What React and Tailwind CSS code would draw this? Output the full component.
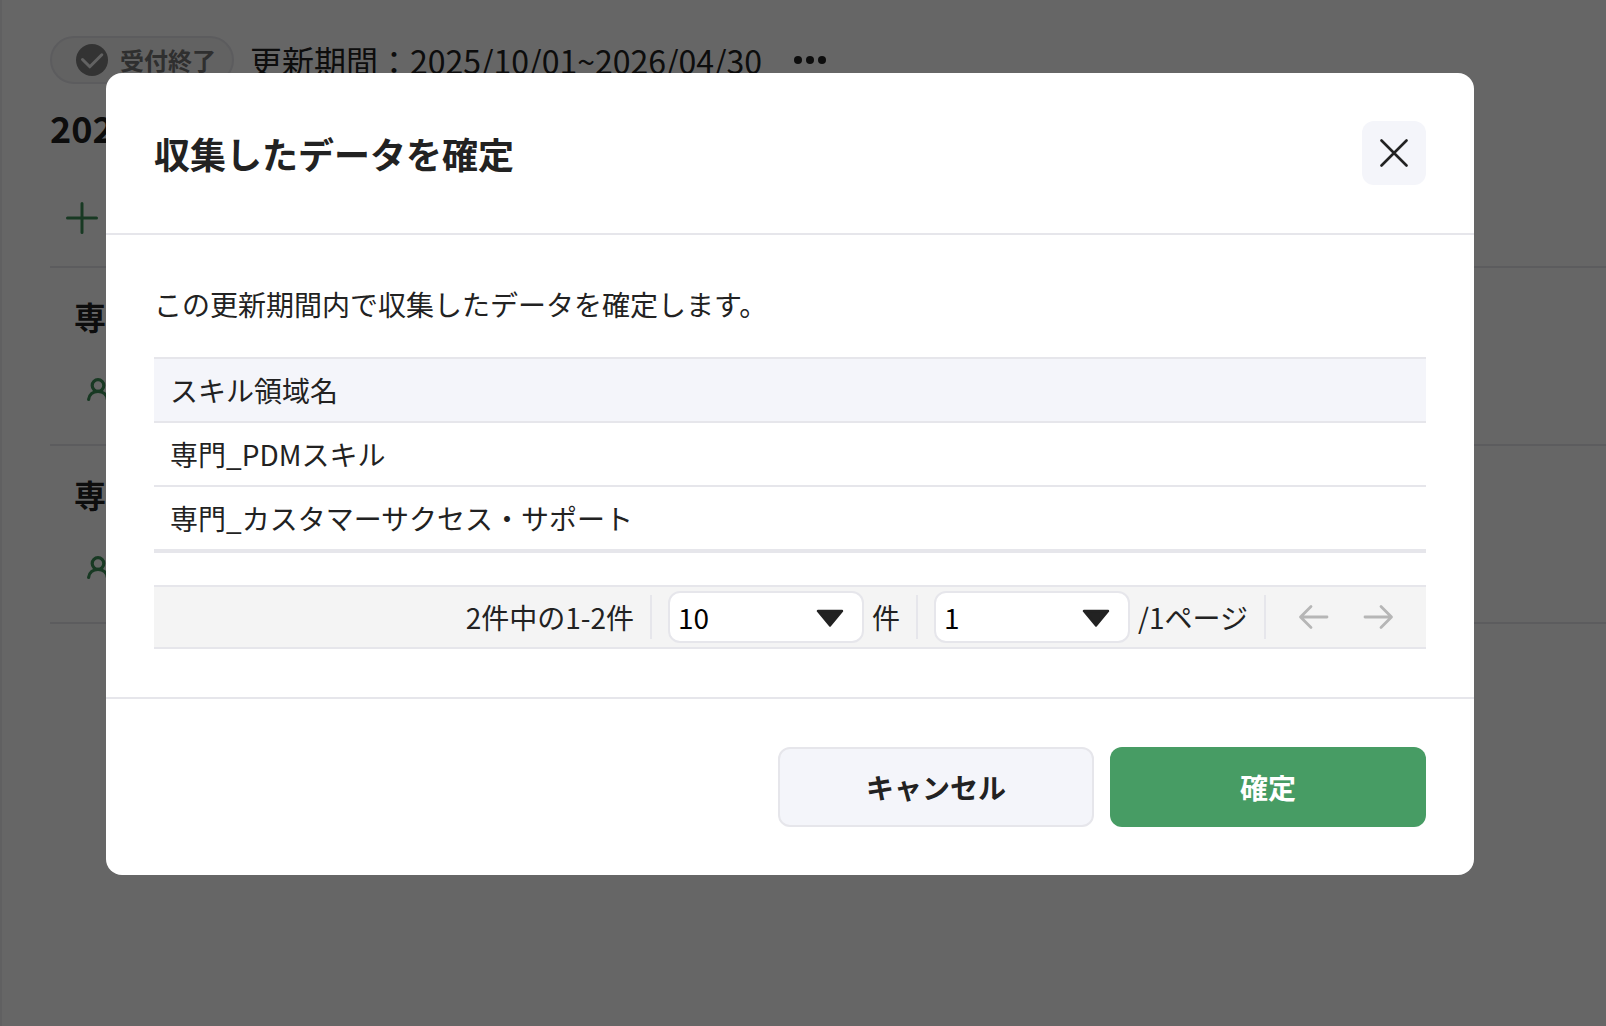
import { useState } from "react";

const skillAreas = ["専門_PDMスキル", "専門_カスタマーサクセス・サポート"];

function CheckCircle() {
  return (
    <svg width="32" height="32" viewBox="0 0 32 32" fill="none" aria-hidden="true">
      <circle cx="16" cy="16" r="16" fill="#808080" />
      <path d="M6.500 15.500l7.300 7.300L25.800 10.800" stroke="#f4f4f4" strokeWidth="3" strokeLinecap="round" strokeLinejoin="round" />
    </svg>
  );
}

function UserIcon() {
  return (
    <svg width="32" height="32" viewBox="0 0 32 32" fill="none" stroke="#3c8f58" strokeWidth="3.2" strokeLinecap="round" aria-hidden="true">
      <circle cx="14" cy="9.500" r="5.800" />
      <path d="M4.600 23.500c.6-5 4.600-8.100 9.400-8.100s8.800 3.100 9.400 8.100" />
    </svg>
  );
}

function Arrow({ flip }) {
  return (
    <svg width="32" height="32" viewBox="0 0 32 32" className={flip ? "rotate-180" : ""} fill="none" stroke="#b6b6b6" strokeWidth="2.8" strokeLinecap="round" strokeLinejoin="round" aria-hidden="true">
      <path d="M29 16H3M13 5.500L2.500 16L13 26.500" />
    </svg>
  );
}

function PageSelect({ label, value, options, onChange }) {
  return (
    <div className="relative">
      <select
        aria-label={label}
        value={value}
        onChange={(e) => onChange(e.target.value)}
        className="block h-[52px] w-[196px] appearance-none rounded-xl border-2 border-[#e6e6eb] bg-white px-2 text-[28px] leading-[42px] text-black"
      >
        {options.map((o) => (
          <option key={o} value={o}>{o}</option>
        ))}
      </select>
      <svg className="pointer-events-none absolute top-[18px] right-5" width="28" height="18" viewBox="0 0 28 18" aria-hidden="true">
        <path d="M2 2h24L14 16.500z" fill="#222" stroke="#222" strokeWidth="2.400" strokeLinejoin="round" />
      </svg>
    </div>
  );
}

function Separator() {
  return <span className="mx-4 h-11 w-[2px] bg-[#e6e6eb]" />;
}

// モーダルの後ろに見えるページ本体
function PeriodPage() {
  return (
    <main className="min-h-screen border-l-2 border-[#f0f0f2] pt-9 pl-12">
      <div className="flex h-12 items-center">
        <span className="flex h-12 items-center gap-3 rounded-full border-2 border-[#e6e6eb] bg-[#f4f4f4] pr-4 pl-6 text-2xl font-bold text-[#757575]">
          <CheckCircle />
          受付終了
        </span>
        <p className="ml-4 text-[32px] leading-[48px]">更新期間：2025/10/01~2026/04/30</p>
        <button type="button" aria-label="メニュー" className="ml-8">
          <svg width="32" height="8" viewBox="0 0 32 8" fill="#222" aria-hidden="true">
            <circle cx="4" cy="4" r="4" />
            <circle cx="16" cy="4" r="4" />
            <circle cx="28" cy="4" r="4" />
          </svg>
        </button>
      </div>
      <h1 className="mt-4 text-4xl leading-[54px] font-bold">202</h1>
      <button type="button" aria-label="追加" className="mt-12 ml-4 block">
        <svg width="32" height="32" viewBox="0 0 32 32" stroke="#3c8f58" strokeWidth="3" strokeLinecap="round" aria-hidden="true">
          <path d="M16 1.500v29M1.500 16h29" />
        </svg>
      </button>
      <ul className="mt-8 border-t-2 border-[#e6e6eb]">
        {[1, 2].map((n) => (
          <li key={n} className="h-[178px] border-b-2 border-[#e6e6eb] pt-6 pl-6">
            <h2 className="text-[32px] leading-[48px] font-bold">専</h2>
            <div className="mt-9 ml-[10px]">
              <UserIcon />
            </div>
          </li>
        ))}
      </ul>
    </main>
  );
}

export default function App() {
  const [perPage, setPerPage] = useState("10");
  const [page, setPage] = useState("1");

  return (
    <div className="relative min-h-screen overflow-hidden bg-white font-['Noto_Sans_CJK_JP',sans-serif] text-[#222]">
      <PeriodPage />

      {/* オーバーレイ */}
      <div className="absolute inset-0 bg-black/60 pt-[73px] pr-[132px] pl-[106px]">
        <section role="dialog" aria-modal="true" aria-labelledby="dialog-title" className="rounded-2xl bg-white">
          <header className="flex items-center justify-between border-b-2 border-[#e6e6eb] p-12">
            <h2 id="dialog-title" className="text-4xl leading-[54px] font-bold">収集したデータを確定</h2>
            <button type="button" aria-label="閉じる" className="flex size-16 items-center justify-center rounded-xl bg-[#f4f5fa]">
              <svg width="28" height="28" viewBox="0 0 28 28" stroke="#222" strokeWidth="2.6" strokeLinecap="round" aria-hidden="true">
                <path d="M1.500 1.500l25 25M26.500 1.500l-25 25" />
              </svg>
            </button>
          </header>

          <div className="p-12 text-[28px] leading-[42px]">
            <p>この更新期間内で収集したデータを確定します。</p>

            <table className="mt-8 w-full border-separate border-spacing-0 border-t-2 border-b-2 border-[#e6e6eb] text-left">
              <thead>
                <tr>
                  <th className="border-b-2 border-[#e6e6eb] bg-[#f4f5fa] px-4 py-[10px] font-normal">スキル領域名</th>
                </tr>
              </thead>
              <tbody>
                {skillAreas.map((name) => (
                  <tr key={name}>
                    <td className="border-b-2 border-[#e6e6eb] px-4 py-[10px]">{name}</td>
                  </tr>
                ))}
              </tbody>
            </table>

            {/* ページネーション */}
            <div className="mt-8 flex h-16 items-center justify-end border-y-2 border-[#e6e6eb] bg-[#f4f4f4] pr-4">
              <span>2件中の1-2件</span>
              <Separator />
              <PageSelect label="表示件数" value={perPage} options={["10", "20", "50"]} onChange={setPerPage} />
              <span className="ml-2">件</span>
              <Separator />
              <PageSelect label="ページ" value={page} options={["1"]} onChange={setPage} />
              <span className="ml-2">/1ページ</span>
              <Separator />
              <button type="button" disabled aria-label="前のページ" className="flex w-16 justify-center">
                <Arrow />
              </button>
              <button type="button" disabled aria-label="次のページ" className="flex w-16 justify-center">
                <Arrow flip />
              </button>
            </div>
          </div>

          <footer className="flex justify-end gap-4 border-t-2 border-[#e6e6eb] p-12 text-[28px] leading-[42px] font-bold">
            <button type="button" className="h-20 w-[316px] rounded-xl border-2 border-[#e6e6eb] bg-[#f4f5fa]">キャンセル</button>
            <button type="button" className="h-20 w-[316px] rounded-xl bg-[#479c64] text-white">確定</button>
          </footer>
        </section>
      </div>
    </div>
  );
}
